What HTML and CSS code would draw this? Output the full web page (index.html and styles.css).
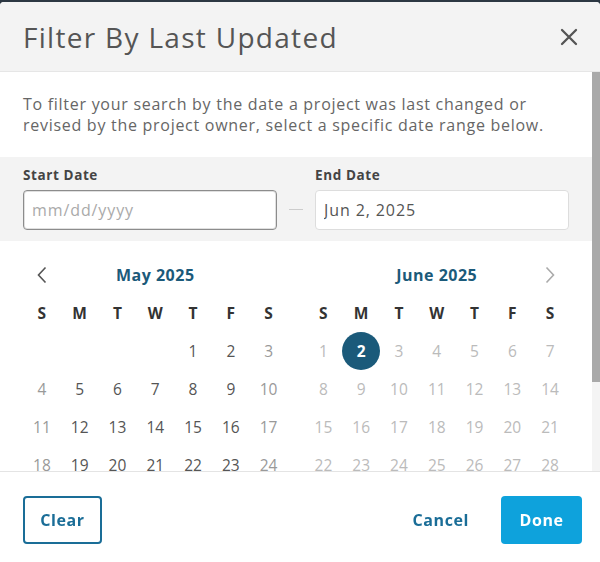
FILE: index.html
```html
<!DOCTYPE html>
<html lang="en">
<head>
  <meta charset="UTF-8" />
  <meta name="viewport" content="width=device-width, initial-scale=1.0" />
  <title>Filter By Last Updated</title>
  <link rel="stylesheet" href="styles.css">
</head>
<body>
  <div class="dialog">
    <header class="dialog-header">
      <h1>Filter By Last Updated</h1>
      <button class="close" aria-label="Close">
        <svg width="18" height="18" viewBox="0 0 18 18"><path d="M2 2L16 16M16 2L2 16" stroke="#555" stroke-width="2.3" stroke-linecap="round"/></svg>
      </button>
    </header>

    <div class="dialog-body">
      <div class="scroll-content">
        <p class="intro">To filter your search by the date a project was last changed or revised by the project owner, select a specific date range below.</p>

        <div class="range">
          <div class="field">
            <label for="start">Start Date</label>
            <input id="start" class="active" type="text" placeholder="mm/dd/yyyy" autofocus>
          </div>
          <span class="dash"></span>
          <div class="field">
            <label for="end">End Date</label>
            <input id="end" type="text" value="Jun 2, 2025">
          </div>
        </div>

        <div class="calendars">
          <div class="month" id="may">
            <div class="month-nav">
              <button class="nav prev" aria-label="Previous month">
                <svg width="10" height="18" viewBox="0 0 10 18"><path d="M8.5 1.5L1.5 9L8.5 16.5" fill="none" stroke="#555" stroke-width="1.6"/></svg>
              </button>
              <span class="month-title">May 2025</span>
              <span class="nav"></span>
            </div>
            <div class="grid"></div>
          </div>
          <div class="month" id="june">
            <div class="month-nav">
              <span class="nav"></span>
              <span class="month-title">June 2025</span>
              <button class="nav next" aria-label="Next month">
                <svg width="10" height="18" viewBox="0 0 10 18"><path d="M1.5 1.5L8.5 9L1.5 16.5" fill="none" stroke="#aaa" stroke-width="1.6"/></svg>
              </button>
            </div>
            <div class="grid"></div>
          </div>
        </div>
      </div>
      <div class="scrollbar"><div class="thumb"></div></div>
    </div>

    <footer class="dialog-footer">
      <button class="btn btn-outline">Clear</button>
      <div class="actions">
        <button class="btn btn-link">Cancel</button>
        <button class="btn btn-primary">Done</button>
      </div>
    </footer>
  </div>

  <script>
    const days = ['S', 'M', 'T', 'W', 'T', 'F', 'S'];

    function buildMonth(el, offset, count, dayClass) {
      const grid = el.querySelector('.grid');
      days.forEach(d => {
        let head = document.createElement('span');
        head.className = 'weekday';
        head.textContent = d;
        grid.appendChild(head);
      });
      for (let i = 0; i < offset; i++) {
        grid.appendChild(document.createElement('span'));
      }
      for (let n = 1; n <= count; n++) {
        let cell = document.createElement('span');
        cell.className = 'day ' + dayClass(n, (offset + n - 1) % 7);
        cell.textContent = n;
        grid.appendChild(cell);
      }
    }

    buildMonth(document.getElementById('may'), 4, 31, (n, col) =>
      col === 0 || col === 6 ? 'weekend' : '');

    buildMonth(document.getElementById('june'), 0, 30, n =>
      n === 2 ? 'selected' : 'disabled');
  </script>
</body>
</html>
```

FILE: styles.css
```css
* {
  box-sizing: border-box;
}

body {
  margin: 0;
  background: #2c3742;
  font-family: 'Open Sans', 'Liberation Sans', sans-serif;
  color: #555;
  height: 562px;
  overflow: hidden;
}

.dialog {
  margin-top: 2px;
  height: 560px;
  background: #fff;
  border-radius: 4px 4px 0 0;
  display: flex;
  flex-direction: column;
  overflow: hidden;
}

.dialog-header {
  height: 70px;
  flex: none;
  background: #f3f3f3;
  border-bottom: 1px solid #e6e6e6;
  display: flex;
  align-items: center;
  justify-content: space-between;
  padding: 0 22px 0 23px;
}

.dialog-header h1 {
  margin: 0;
  font-size: 28px;
  font-weight: 400;
  letter-spacing: 1.3px;
  color: #555;
}

.close {
  background: none;
  border: none;
  padding: 0;
  width: 18px;
  height: 18px;
  cursor: pointer;
}

.dialog-body {
  flex: 1;
  min-height: 0;
  display: flex;
}

.scroll-content {
  flex: 1;
  overflow: hidden;
}

.scrollbar {
  width: 8px;
  flex: none;
  background: #f4f4f4;
}

.thumb {
  height: 310px;
  background: #a9a9a9;
}

.intro {
  margin: 0;
  padding: 22px 23px 21px;
  font-size: 16px;
  line-height: 21px;
  letter-spacing: 0.72px;
  color: #666;
}

.range {
  background: #f3f3f3;
  padding: 9px 23px 11px 23px;
  display: flex;
  align-items: flex-end;
  gap: 12px;
}

.field {
  flex: 1;
  display: flex;
  flex-direction: column;
  gap: 6px;
}

.field label {
  font-size: 13.5px;
  line-height: 18px;
  font-weight: 700;
  letter-spacing: 0.6px;
  color: #444;
}

.field input {
  height: 40px;
  border: 1px solid #ddd;
  border-radius: 4px;
  background: #fff;
  padding: 0 8px;
  font-family: inherit;
  font-size: 16px;
  letter-spacing: 0.9px;
  color: #555;
  caret-color: #333;
  outline: none;
}

.field input.active {
  border-color: #8c8c8c;
  box-shadow: inset 0 0 0 1px #e0e0e0;
}

.field input::placeholder {
  color: #aaa;
}

.dash {
  width: 14px;
  height: 1px;
  background: #ccc;
  margin-bottom: 20px;
}

.calendars {
  display: grid;
  grid-template-columns: 1fr 1fr;
  gap: 17px;
  padding: 15px 23px 20px 23px;
}

.month-nav {
  height: 38px;
  display: flex;
  align-items: center;
  justify-content: space-between;
}

.nav {
  width: 38px;
  height: 38px;
  background: none;
  border: none;
  padding: 0;
  display: flex;
  align-items: center;
  justify-content: center;
}

.month-title {
  font-size: 16px;
  font-weight: 700;
  letter-spacing: 0.5px;
  color: #1b5a7a;
}

.grid {
  display: grid;
  grid-template-columns: repeat(7, 1fr);
  grid-auto-rows: 38px;
}

.grid span {
  display: flex;
  align-items: center;
  justify-content: center;
  font-size: 15.5px;
}

.weekday {
  font-weight: 700;
  color: #333;
}

.day {
  color: #555;
}

.day.weekend {
  color: #999;
}

.day.disabled {
  color: #bbb;
}

.day.selected {
  color: #fff;
  font-weight: 700;
  position: relative;
  z-index: 0;
}

.day.selected::before {
  content: '';
  position: absolute;
  width: 38px;
  height: 38px;
  border-radius: 50%;
  background: #1b5a7a;
  z-index: -1;
}

.dialog-footer {
  height: 91px;
  flex: none;
  border-top: 1px solid #e4e4e4;
  display: flex;
  align-items: flex-start;
  justify-content: space-between;
  padding: 24px 18px 0 23px;
}

.actions {
  display: flex;
  align-items: center;
  gap: 32px;
}

.btn {
  font-family: inherit;
  font-size: 16px;
  font-weight: 700;
  letter-spacing: 0.6px;
  height: 48px;
  border-radius: 4px;
  cursor: pointer;
}

.btn-outline {
  width: 79px;
  background: #fff;
  border: 2px solid #1a6d97;
  color: #1a6d97;
}

.btn-link {
  background: none;
  border: none;
  color: #1a6d97;
  padding: 0;
}

.btn-primary {
  width: 81px;
  background: #0ea2dc;
  border: none;
  color: #fff;
}
```
